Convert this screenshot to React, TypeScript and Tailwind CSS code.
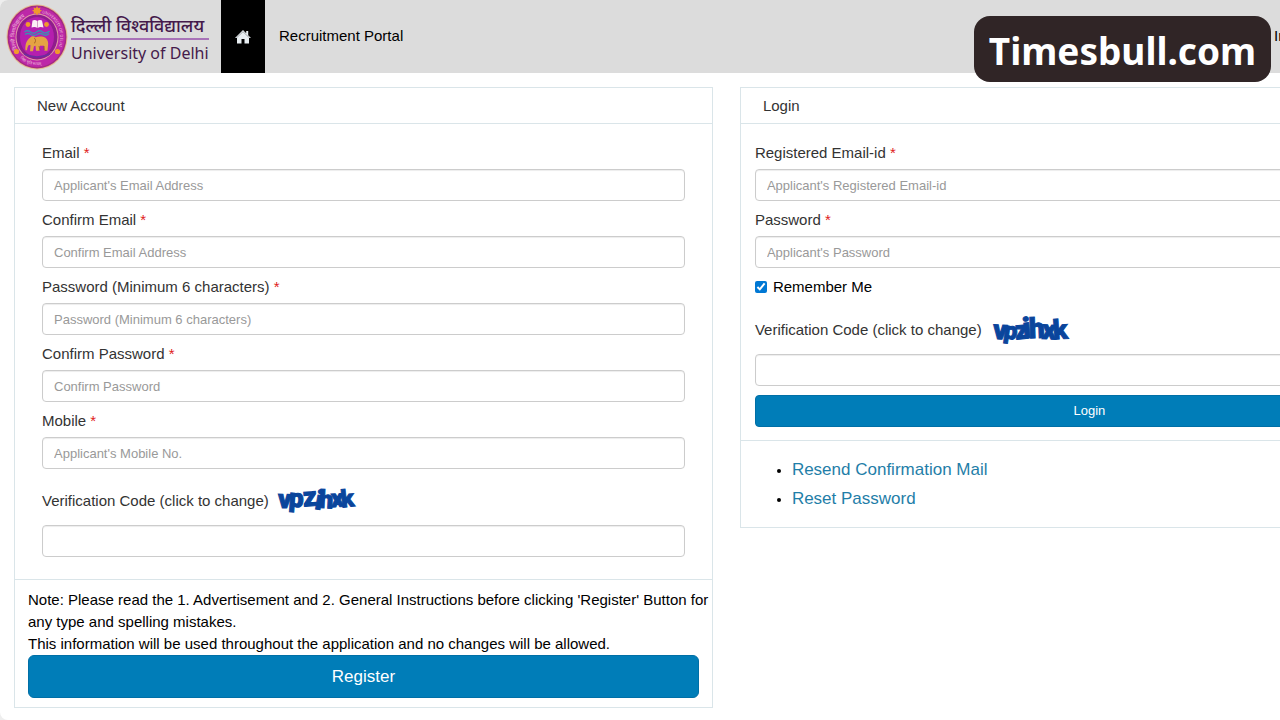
import { useState } from "react";

type Field = { id: string; label: string; placeholder: string; type?: string };

const accountFields: Field[] = [
  { id: "email", label: "Email", placeholder: "Applicant's Email Address", type: "email" },
  { id: "confirm-email", label: "Confirm Email", placeholder: "Confirm Email Address", type: "email" },
  { id: "password", label: "Password (Minimum 6 characters)", placeholder: "Password (Minimum 6 characters)", type: "password" },
  { id: "confirm-password", label: "Confirm Password", placeholder: "Confirm Password", type: "password" },
  { id: "mobile", label: "Mobile", placeholder: "Applicant's Mobile No.", type: "tel" },
];

const loginFields: Field[] = [
  { id: "login-email", label: "Registered Email-id", placeholder: "Applicant's Registered Email-id", type: "email" },
  { id: "login-password", label: "Password", placeholder: "Applicant's Password", type: "password" },
];

const inputClass =
  "block h-8 w-full rounded border border-[#ccc] bg-white px-[11px] text-[13px] text-[#555] shadow-[inset_0_1px_1px_rgba(0,0,0,0.075)] placeholder:text-[#999] focus:border-[#007db8] focus:outline-none";

type Glyph = { c: string; x: number; y: number; r: number; s: number };

const captchaA: Glyph[] = [
  { c: "v", x: 0, y: 22, r: 2, s: 26 },
  { c: "p", x: 11, y: 21, r: 4, s: 26 },
  { c: "z", x: 25, y: 20, r: -4, s: 27 },
  { c: "i", x: 37, y: 24, r: 10, s: 27 },
  { c: "h", x: 41, y: 22, r: 3, s: 25 },
  { c: "x", x: 53, y: 21, r: -3, s: 25 },
  { c: "k", x: 63, y: 21, r: -6, s: 24 },
];

const captchaB: Glyph[] = [
  { c: "v", x: 2, y: 24, r: 3, s: 27 },
  { c: "p", x: 13, y: 24, r: 8, s: 24 },
  { c: "z", x: 24, y: 24, r: -5, s: 26 },
  { c: "i", x: 32, y: 23, r: -6, s: 29 },
  { c: "h", x: 38, y: 23, r: -2, s: 28 },
  { c: "x", x: 51, y: 24, r: 3, s: 27 },
  { c: "k", x: 62, y: 24, r: -4, s: 27 },
];

function Captcha({ glyphs }: { glyphs: Glyph[] }) {
  return (
    <svg width="80" height="30" viewBox="0 0 80 30" className="overflow-visible" role="img" aria-label="Verification code">
      {glyphs.map((g) => (
        <text key={g.c} x={g.x} y={g.y} transform={`rotate(${g.r} ${g.x + 6} ${g.y - 7})`} fontSize={g.s}
          fontFamily="Roboto, sans-serif" fontWeight="900" fill="#0a459c" stroke="#0a459c" strokeWidth="1">
          {g.c}
        </text>
      ))}
    </svg>
  );
}

function HomeIcon() {
  return (
    <svg width="16" height="14" viewBox="0 0 16 14" fill="currentColor" aria-hidden="true">
      <path d="M8 0l3.200 3.200V1h2v4.200L16 8h-2v5.500H9.500V9h-3v4.500H2V8H0z" />
      <path d="M1.200 8.200L8 1.700l6.800 6.500" fill="none" stroke="#000" strokeWidth=".5" opacity=".6" />
    </svg>
  );
}

function Emblem() {
  return (
    <svg width="62" height="66" viewBox="0 0 62 66" className="shrink-0 overflow-visible" aria-hidden="true">
      <defs>
        <path id="ring-left" d="M11 45 A23 25 0 0 1 27 9" />
        <path id="ring-right" d="M36 9 A23 25 0 0 1 52 44" />
        <path id="ring-bottom" d="M14 54 A25 27 0 0 0 48 54" />
      </defs>
      <ellipse cx="31" cy="33" rx="30.5" ry="32.5" fill="#e6bd91" />
      <ellipse cx="31" cy="33" rx="29.5" ry="31.5" fill="#a32b83" />
      <ellipse cx="31" cy="33" rx="28" ry="30" fill="#bd28a8" />
      <ellipse cx="31" cy="33" rx="21.5" ry="23.5" fill="#e09aa5" />
      <ellipse cx="31" cy="33" rx="20.5" ry="22.5" fill="#8f1d8c" />
      <ellipse cx="31" cy="33" rx="17" ry="20" fill="#b51fae" />
      <g fill="#f2c6dc" fontSize="5" fontFamily="'Noto Sans', sans-serif">
        <text><textPath href="#ring-left">दिल्ली विश्वविद्यालय</textPath></text>
        <text fontSize="4"><textPath href="#ring-right">UNIVERSITY OF DELHI</textPath></text>
        <text fontSize="4"><textPath href="#ring-bottom">निष्ठा धृति सत्यम्</textPath></text>
      </g>
      <g fill="#f09a2c">
        <path d="M31 2l1.2 2.2 2.3-.8-.6 2.4 2.2.9-2.2 1 .6 2.3-2.3-.7L31 11.5l-1.2-2.2-2.3.7.6-2.3-2.2-1 2.2-.9-.6-2.4 2.3.8z" />
        <circle cx="22" cy="20.500" r="2.400" />
        <circle cx="40.500" cy="20.500" r="2.400" />
        <circle cx="10.500" cy="47.500" r="2.600" />
        <circle cx="51.500" cy="47.500" r="2.600" />
      </g>
      <path d="M26.500 16.500q2.500-1 4.800.5 2.200-1.500 4.700-.5l1.500 7q-3.500-1-6 .5-2.500-1.500-6-.5z" fill="#fbeff5" />
      <path d="M31.500 17v7" stroke="#c07ab0" strokeWidth=".7" />
      <path d="M18.500 28q3-2.500 6 0t6 0 6 0 7-1M19 30.500q3-2 6 0t6 0 6 0 6-1" fill="none" stroke="#3c8fb4" strokeWidth="1.500" />
      <path d="M24 33.500c2-1.800 4-1.500 5.500-.3 3-1 7.500-1.200 10 .5 2.500 2 3 5 2.500 8l-.5 5h-3l-.5-5h-4l-.5 5h-3.500l-.5-5-1.500.5-1 5h-3l.5-6c-2-1-3 1-3.500 5h-1.500c-.5-5 .5-10 5-12.700z" fill="#e5a343" />
      <path d="M28 34c2 1 2 4 0 5.500M33 42l1 4M38 42v4" fill="none" stroke="#97551f" strokeWidth=".8" />
      <path d="M18 50q13 6 26 0" fill="none" stroke="#6b2da0" strokeWidth="1.500" />
    </svg>
  );
}

function FormField({ field }: { field: Field }) {
  return (
    <div className="mb-[11px]">
      <label htmlFor={field.id} className="mb-2 block leading-4">
        {field.label} <span className="text-[#e02020]">*</span>
      </label>
      <input id={field.id} type={field.type} placeholder={field.placeholder} className={inputClass} />
    </div>
  );
}

function VerificationCode({ id, glyphs }: { id: string; glyphs: Glyph[] }) {
  return (
    <>
      <div className="mb-[9px] flex items-center gap-[9px]">
        <label htmlFor={id} className="whitespace-nowrap">Verification Code (click to change)</label>
        <button type="button" aria-label="Change verification code" className="cursor-pointer">
          <Captcha glyphs={glyphs} />
        </button>
      </div>
      <input id={id} className={inputClass} />
    </>
  );
}

function Header() {
  return (
    <header className="relative flex h-[73px] items-stretch bg-[#dcdcdc]">
      <a href="#" className="flex w-[221px] shrink-0 items-center gap-[3px] pl-1.5">
        <Emblem />
        <span className="flex flex-col whitespace-nowrap pt-1 font-['Noto_Sans',sans-serif] text-[#451a4b]">
          <span className="border-b-2 border-[#a873b8] text-lg leading-[26px] font-medium">दिल्ली विश्वविद्यालय</span>
          <span className="text-base leading-[26px]">University of Delhi</span>
        </span>
      </a>
      <a href="#" aria-label="Home" className="flex w-11 shrink-0 items-center justify-center bg-black text-[#e8eef2]">
        <HomeIcon />
      </a>
      <a href="#" className="flex items-center px-3.5 text-black">Recruitment Portal</a>
      <a href="#" className="ml-auto flex w-1.5 items-center overflow-hidden text-black">In</a>
      <div className="absolute top-4 right-[9px] z-10 flex h-[66px] w-[297px] items-center justify-center rounded-2xl bg-[#302526] pt-1 font-['Noto_Sans',sans-serif] text-[37px] font-bold text-white">
        Timesbull.com
      </div>
    </header>
  );
}

export default function App() {
  const [remember, setRemember] = useState(true);

  return (
    <div className="min-h-screen overflow-hidden bg-[#eee] font-['Liberation_Sans',Arial,sans-serif] text-[15px] text-[#333]">
      <div className="min-h-screen overflow-hidden rounded-l-lg bg-white">
        <Header />
        {/* the two columns run past the right edge of the window */}
        <main className="grid w-[113.5%] grid-cols-2 items-start gap-[27px] px-3.5 pt-3.5">
          <section className="border border-[#dae5e9]">
            <h2 className="border-b border-[#dae5e9] px-[22px] leading-[35px]">New Account</h2>
            <form onSubmit={(e) => e.preventDefault()}>
              <div className="px-[27px] pt-[21px] pb-[22px]">
                {accountFields.map((f) => <FormField key={f.id} field={f} />)}
                <div className="pt-1.5">
                  <VerificationCode id="register-code" glyphs={captchaA} />
                </div>
              </div>
              <div className="border-t border-[#dae5e9] px-[13px] py-[9px]">
                <p className="-mr-3 leading-[22px] text-black">
                  Note: Please read the 1. Advertisement and 2. General Instructions before clicking 'Register' Button for any type and spelling mistakes.
                  <br />
                  This information will be used throughout the application and no changes will be allowed.
                </p>
                <button type="submit" className="h-[43px] w-full rounded-md border border-[#006fa6] bg-[#007db8] text-[17px] text-white">Register</button>
              </div>
            </form>
          </section>

          <section className="border border-[#dae5e9]">
            <h2 className="border-b border-[#dae5e9] px-[22px] leading-[35px]">Login</h2>
            <form onSubmit={(e) => e.preventDefault()} className="px-3.5 pt-[21px] pb-[13px]">
              {loginFields.map((f) => <FormField key={f.id} field={f} />)}
              <label className="mb-5 flex items-center gap-1.5 leading-4 text-black">
                <input type="checkbox" checked={remember} onChange={(e) => setRemember(e.target.checked)} className="size-3 accent-[#0078d4]" />
                Remember Me
              </label>
              <VerificationCode id="login-code" glyphs={captchaB} />
              <button type="submit" className="mt-[9px] h-8 w-full rounded border border-[#006fa6] bg-[#007db8] text-[13px] text-white">Login</button>
            </form>
            <ul className="list-disc border-t border-[#dae5e9] py-3.5 pl-[51px] text-[17px] leading-[29px] text-black marker:text-[13px]">
              <li><a href="#" className="text-[#1f7ea8] hover:underline">Resend Confirmation Mail</a></li>
              <li><a href="#" className="text-[#1f7ea8] hover:underline">Reset Password</a></li>
            </ul>
          </section>
        </main>
      </div>
    </div>
  );
}
